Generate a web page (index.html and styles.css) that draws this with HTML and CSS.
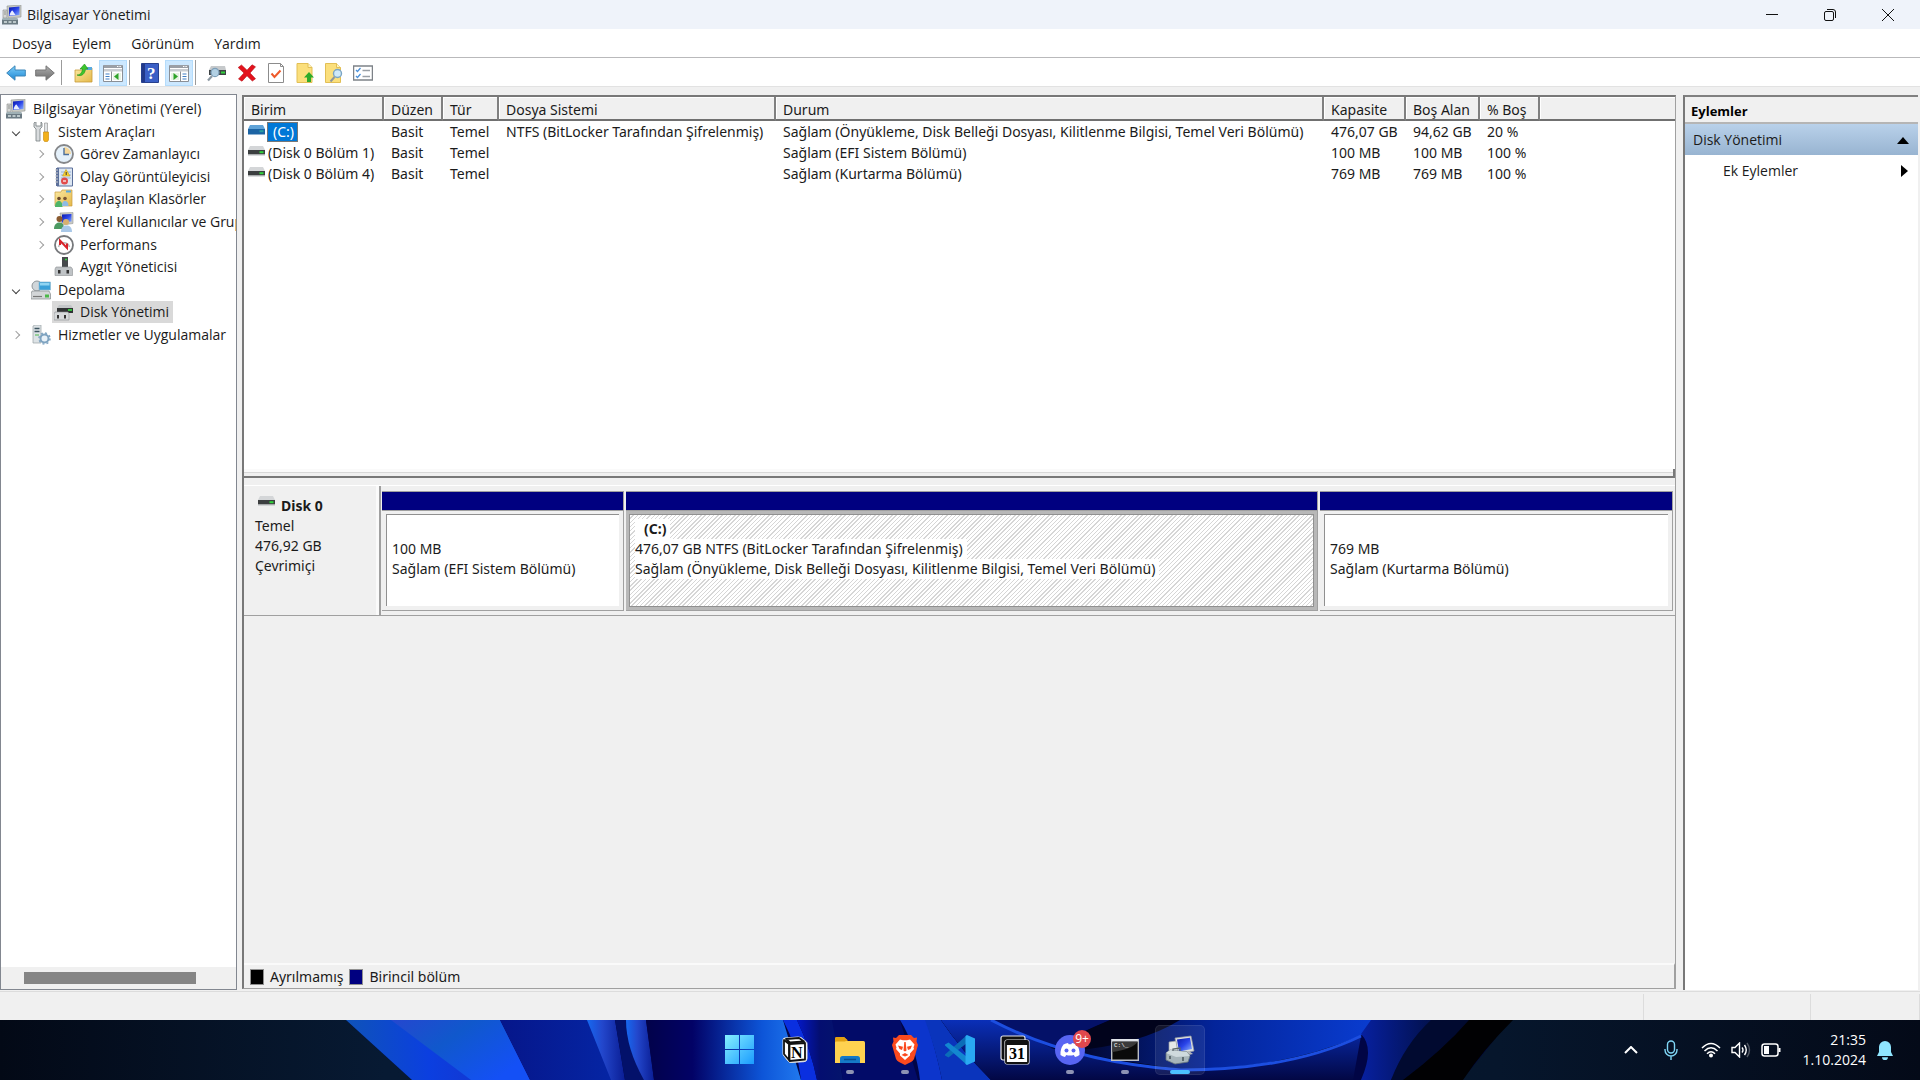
FILE: index.html
```html
<!DOCTYPE html>
<html lang="tr">

<head>
    <meta charset="UTF-8">
    <meta name="viewport" content="width=device-width, initial-scale=1.0">
    <title>Bilgisayar Yönetimi</title>
    <link rel="stylesheet" href="styles.css">
</head>

<body>
    <!-- shared icons -->
    <svg class="sprite" aria-hidden="true">
        <defs>
            <linearGradient id="g-screen" x1="0" y1="0" x2="1" y2="1">
                <stop offset="0" stop-color="#0a18a8" />
                <stop offset=".5" stop-color="#2a44e8" />
                <stop offset="1" stop-color="#8fb4ff" />
            </linearGradient>
            <linearGradient id="g-folder" x1="0" y1="0" x2="1" y2="1">
                <stop offset="0" stop-color="#fbe9a2" />
                <stop offset="1" stop-color="#e5b94a" />
            </linearGradient>
            <linearGradient id="g-blue" x1="0" y1="0" x2="0" y2="1">
                <stop offset="0" stop-color="#7fd0fa" />
                <stop offset="1" stop-color="#1b86d4" />
            </linearGradient>
            <linearGradient id="g-gray" x1="0" y1="0" x2="0" y2="1">
                <stop offset="0" stop-color="#b0b0b0" />
                <stop offset="1" stop-color="#6a6a6a" />
            </linearGradient>
        </defs>
        <symbol id="i-computer" viewBox="0 0 20 20">
            <path d="M5 1 19 0v12l-13 1z" fill="#c9cbc4" stroke="#8f9290" stroke-width=".6" />
            <path d="M7 2.500 17.500 1.500v8.500L7 11z" fill="url(#g-screen)" />
            <path d="M7.500 10.500c.5-3 2-5 3-5l3 4.500z" fill="#e6ecff" />
            <path d="M1 5h4v8H1z" fill="#d5d7d5" stroke="#888" stroke-width=".6" />
            <path d="M2 7h2M2 9h2" stroke="#777" stroke-width=".7" />
            <path d="M1 13h14l1 2v4.500H0V15z" fill="#6b7a83" />
            <path d="M1 13h14l1 2H0z" fill="#9fb0b5" />
            <path d="M2 17h3M6.500 17h3M11 17h3" stroke="#d8e2e4" stroke-width="1.400" />
        </symbol>
        <symbol id="i-drive" viewBox="0 0 17 10">
            <path d="M2 0h13l2 4H0z" fill="#d4d6d8" />
            <path d="M0 4h17v4.500H0z" fill="#3c3f40" />
            <path d="M0 8.500h17V9.500H0z" fill="#b7babc" />
            <path d="M11.500 6.200h4" stroke="#2fd43a" stroke-width="2" />
        </symbol>
        <symbol id="i-drive-sel" viewBox="0 0 17 10">
            <path d="M2 0h13l2 4H0z" fill="#5fa3d8" />
            <path d="M0 4h17v5.500H0z" fill="#1c64a4" />
            <path d="M11.500 6.200h4" stroke="#28a0a0" stroke-width="2" />
        </symbol>
    </svg>

    <header class="titlebar">
        <svg class="icon20"><use href="#i-computer" /></svg>
        <h1>Bilgisayar Yönetimi</h1>
        <div class="window-buttons">
            <button aria-label="Simge durumuna küçült"><svg width="12" height="12" viewBox="0 0 12 12"><path d="M0 5.500h12" /></svg></button>
            <button aria-label="Önceki boyut"><svg width="12" height="12" viewBox="0 0 12 12"><rect x=".5" y="2.500" width="9" height="9" rx="1.500" /><path d="M3 .5h6a2.500 2.500 0 0 1 2.500 2.500v6" /></svg></button>
            <button aria-label="Kapat"><svg width="12" height="12" viewBox="0 0 12 12"><path d="M0 0l12 12M12 0 0 12" /></svg></button>
        </div>
    </header>

    <nav class="menubar">
        <button>Dosya</button>
        <button>Eylem</button>
        <button>Görünüm</button>
        <button>Yardım</button>
    </nav>

    <div class="toolbar" role="toolbar">
        <button aria-label="Geri"><svg width="20" height="16" viewBox="0 0 20 16"><path d="M.7 8 9 .8V5H19.300v6H9v4.200z" fill="url(#g-blue)" stroke="#3d86b8" /></svg></button>
        <button aria-label="İleri"><svg width="20" height="16" viewBox="0 0 20 16"><path d="M19.300 8 11 .8V5H.7v6H11v4.200z" fill="url(#g-gray)" stroke="#777" /></svg></button>
        <span class="sep"></span>
        <button aria-label="Bir düzey yukarı">
            <svg width="20" height="20" viewBox="0 0 20 20">
                <path d="M1 7h7l2-2h8v14H1z" fill="url(#g-folder)" stroke="#c79a38" stroke-width=".8" />
                <path d="M12 4h6v3h-6z" fill="#5aa9dd" />
                <path d="M3 12c3 0 5-2 5.500-6H6l4.500-5L14 6h-2.500c-.5 5-4 8-8.500 6z" fill="#3cc52e" stroke="#239018" stroke-width=".6" />
            </svg>
        </button>
        <button class="on" aria-label="Konsol ağacını göster">
            <svg width="20" height="18" viewBox="0 0 20 18">
                <path d="M.5 1.500h19v16H.5z" fill="#fff" stroke="#8a8f96" />
                <path d="M1 1h18v3H1z" fill="#9a9fa6" /><path d="M14 2.500h4" stroke="#fff" stroke-dasharray="1 .6" />
                <path d="M1 5h18v2.500H1z" fill="#c9cdd2" />
                <path d="M2.500 10h4M2.500 12.500h4M2.500 15h4" stroke="#3f7ec5" stroke-width="1.200" />
                <path d="M8.500 7.500v10" stroke="#8a8f96" />
                <path d="M10 9h8v7h-8z" fill="#e8f3e4" /><path d="M15.500 9v7L11 12.500z" fill="#2fa32a" />
            </svg>
        </button>
        <span class="sep tight"></span>
        <button aria-label="Yardım">
            <svg width="18" height="20" viewBox="0 0 18 20">
                <path d="M.5.5h17v19H.5z" fill="#3a5fc6" stroke="#27408e" /><path d="M1 1h3v18H1z" fill="#22398a" />
                <text x="6" y="16" class="glyph-help">?</text>
            </svg>
        </button>
        <button class="on" aria-label="Eylem bölmesini göster">
            <svg width="20" height="18" viewBox="0 0 20 18">
                <path d="M.5 1.500h19v16H.5z" fill="#fff" stroke="#8a8f96" />
                <path d="M1 1h18v3H1z" fill="#9a9fa6" /><path d="M14 2.500h4" stroke="#fff" stroke-dasharray="1 .6" />
                <path d="M1 5h18v2.500H1z" fill="#c9cdd2" />
                <path d="M13.500 10h4M13.500 12.500h4M13.500 15h4" stroke="#3f7ec5" stroke-width="1.200" />
                <path d="M11.500 7.500v10" stroke="#8a8f96" />
                <path d="M2 9h8v7H2z" fill="#e8f3e4" /><path d="M4.500 9v7L9 12.500z" fill="#2fa32a" />
            </svg>
        </button>
        <span class="sep tight"></span>
        <button class="wide" aria-label="Diskleri yeniden tara">
            <svg width="20" height="18" viewBox="0 0 20 18">
                <path d="M4 2h14l1 4H2z" fill="#c6c9cb" /><path d="M2 6h17v5H2z" fill="#3d4244" /><path d="M14 8.500h4" stroke="#31d13c" stroke-width="2" />
                <circle cx="8" cy="8.500" r="4" fill="#bfe0f5" fill-opacity=".9" stroke="#7e9fb8" stroke-width="1.300" />
                <path d="M5 12 1 16.500" stroke="#8b98a2" stroke-width="2.200" />
            </svg>
        </button>
        <button aria-label="Sil"><svg width="20" height="18" viewBox="0 0 20 18"><path d="M4.500 1 10 6.200 15 .8l3.500 2L13 9l5.500 5.800L15.300 17 10 11.800 5 17.200 1.500 15 7 9 1.200 3.500z" fill="#e3121c" stroke="#b50d15" stroke-width=".6" /></svg></button>
        <button aria-label="Özellikler"><svg width="20" height="20" viewBox="0 0 20 20"><path d="M2.500.5h12l3 3v16h-15z" fill="#fff" stroke="#8c8c8c" /><path d="M14.500.5v3h3" fill="none" stroke="#8c8c8c" /><path d="m5.500 10.500 3 3.500 6-6.500" fill="none" stroke="#ee5a2a" stroke-width="2" /></svg></button>
        <button aria-label="Dışarı aktar"><svg width="20" height="20" viewBox="0 0 20 20"><path d="M2 .5h11l4 4v15H2z" fill="#fbdf7c" stroke="#e2bf55" /><path d="M13 .5v4h4" fill="#fff3bd" stroke="#e2bf55" /><path d="M14 9l5 5.500h-3V19h-4v-4.500H9z" fill="#2eab29" /></svg></button>
        <button aria-label="Bul"><svg width="20" height="20" viewBox="0 0 20 20"><path d="M1.500.5h11l4 4v15h-15z" fill="#fbdf7c" stroke="#e2bf55" /><path d="M12.500.5v4h4" fill="#fff3bd" stroke="#e2bf55" /><circle cx="13.500" cy="10.500" r="4" fill="#cfe9fa" stroke="#7ba5c3" stroke-width="1.400" /><path d="m10.500 14-4 4.500" stroke="#8f969b" stroke-width="2" /></svg></button>
        <button aria-label="Liste"><svg width="20" height="16" viewBox="0 0 20 16"><path d="M.5 1h19v14H.5z" fill="#fff" stroke="#7d8288" stroke-width="1.500" /><path d="m3 5 1.500 1.500L7.500 3M3 11l1.500 1.500L7.500 9" fill="none" stroke="#4a90d9" stroke-width="1.300" /><path d="M9.500 5.500H17M9.500 11.500H17" stroke="#9aa0a6" stroke-width="1.400" /></svg></button>
    </div>

    <main class="workspace">
        <aside class="tree-pane">
            <ul class="tree" role="tree">
                <li class="lv0">
                    <svg class="icon20"><use href="#i-computer" /></svg>
                    <span>Bilgisayar Yönetimi (Yerel)</span>
                </li>
                <li class="lv1">
                    <i class="chev open"></i>
                    <svg class="icon20" viewBox="0 0 20 20">
                        <path d="M4 0 3 1v4l2 2v12h4V7l2-2V1L10 0v4H5V0z" fill="#d9dcde" stroke="#777d82" stroke-width=".8" />
                        <path d="M13.500 1h3v9h-3z" fill="#e1e4e6" stroke="#888" stroke-width=".6" />
                        <path d="M12.500 10h5v8l-1 1.500h-3l-1-1.500z" fill="#f2b01a" stroke="#c88607" stroke-width=".6" />
                    </svg>
                    <span>Sistem Araçları</span>
                </li>
                <li class="lv2">
                    <i class="chev"></i>
                    <svg class="icon20" viewBox="0 0 20 20">
                        <circle cx="10" cy="10" r="9" fill="#e4f0fa" stroke="#85878a" stroke-width="1.800" />
                        <path d="M10 10V3a7 7 0 0 1 7 7z" fill="#f6d79a" />
                        <path d="M10 4v6.500h5" fill="none" stroke="#4b6f9c" stroke-width="1.400" />
                    </svg>
                    <span>Görev Zamanlayıcı</span>
                </li>
                <li class="lv2">
                    <i class="chev"></i>
                    <svg class="icon20" viewBox="0 0 20 20">
                        <path d="M3 1h15.500v18H3z" fill="#dce6f2" stroke="#5b6f9a" /><path d="M2 1h3v18H2z" fill="#5b6f9a" />
                        <path d="M1 3h3M1 6h3M1 9h3M1 12h3M1 15h3" stroke="#ccc" />
                        <path d="M7 5h10M7 8h10M7 11h10" stroke="#7a9cd0" stroke-width=".7" />
                        <path d="M12 2.500 16 9H8.500z" fill="#fbd332" stroke="#c29a12" stroke-width=".6" /><path d="M12.200 5v3" stroke="#333" />
                        <circle cx="10.500" cy="14" r="3.500" fill="#e24b4b" /><path d="M9 14h3" stroke="#fff" stroke-width="1.200" />
                    </svg>
                    <span>Olay Görüntüleyicisi</span>
                </li>
                <li class="lv2">
                    <i class="chev"></i>
                    <svg class="icon20" viewBox="0 0 20 20">
                        <path d="M1 3h6l1-2h10v16H1z" fill="url(#g-folder)" stroke="#c99b3d" stroke-width=".7" /><path d="M12 1.500h5v2h-5z" fill="#5aa9dd" />
                        <circle cx="5" cy="9.500" r="1.800" fill="#6b4a2c" /><circle cx="11" cy="9.500" r="1.800" fill="#7a5734" />
                        <path d="M1 18c0-5 2.500-6 4-6s3.500 1 3.500 6z" fill="#4fb56a" /><path d="M8 17c0-4 1.500-5 3-5s3.500 1 3.500 5z" fill="#8ebbe4" />
                    </svg>
                    <span>Paylaşılan Klasörler</span>
                </li>
                <li class="lv2">
                    <i class="chev"></i>
                    <svg class="icon20" viewBox="0 0 20 20">
                        <path d="M6 1 19 .5v11L8 13z" fill="#c9cbc4" stroke="#999" stroke-width=".6" /><path d="M8 2.500 17.500 2v7.500L8 10.500z" fill="url(#g-screen)" />
                        <circle cx="5.500" cy="7" r="3" fill="#8a5a30" /><circle cx="12" cy="10" r="3" fill="#d8b070" />
                        <path d="M0 17c0-5 3-6.500 5.500-6.500S10 12 10 17z" fill="#4d9a63" /><path d="M7 20c0-5 2.500-6.500 5.500-6.500S18 15 18 20z" fill="#a9c8e8" />
                    </svg>
                    <span>Yerel Kullanıcılar ve Gruplar</span>
                </li>
                <li class="lv2">
                    <i class="chev"></i>
                    <svg class="icon20" viewBox="0 0 20 20">
                        <circle cx="10" cy="10" r="9" fill="#fff" stroke="#77797c" stroke-width="1.800" />
                        <path d="M4.500 12a5.700 5.700 0 0 1 11 0" fill="none" stroke="#bbb" stroke-width="1.500" />
                        <path d="M6 10V5.500l7 7.500V8.500" fill="none" stroke="#d8232a" stroke-width="2" />
                    </svg>
                    <span>Performans</span>
                </li>
                <li class="lv2">
                    <i class="chev none"></i>
                    <svg class="icon20" viewBox="0 0 20 20">
                        <path d="M8 0h6v11H8z" fill="#46494c" /><path d="M11 2.500h2" stroke="#35d23f" stroke-width="1.500" />
                        <path d="M2 10h15l1.500 2v6.500H1V12z" fill="#bfc3c6" stroke="#8b8f92" stroke-width=".6" />
                        <path d="M4 13h2.500v3.500H4zM12.500 13H15v3.500h-2.500z" fill="#333" />
                    </svg>
                    <span>Aygıt Yöneticisi</span>
                </li>
                <li class="lv1">
                    <i class="chev open"></i>
                    <svg class="icon20" viewBox="0 0 20 20">
                        <circle cx="6" cy="6" r="5" fill="#d0d6da" stroke="#8e9599" /><path d="M8 2h11.500v8H8z" fill="#3aa0d8" stroke="#8fbcd2" stroke-width=".7" /><path d="M9 3h9.500v2.500H9z" fill="#8fd4f2" />
                        <path d="M1 11h17l1.500 3v5H0v-5z" fill="#d3d6d8" stroke="#85898c" stroke-width=".7" /><path d="M2 16.500h9" stroke="#777" stroke-width="1.200" /><path d="M14 14.500h4v3h-4z" fill="#4bb84a" />
                    </svg>
                    <span>Depolama</span>
                </li>
                <li class="lv2 selected">
                    <i class="chev none"></i>
                    <svg class="icon20" viewBox="0 0 20 20">
                        <path d="M5 3h12l2 3H3z" fill="#c3c6c8" /><path d="M3 6h16v5H3z" fill="#2f3233" /><path d="M14 8h4" stroke="#35d23f" stroke-width="1.800" />
                        <path d="M1 10h13l1 2v6H0v-6z" fill="#d6d9db" stroke="#8b8f92" stroke-width=".6" /><path d="M3 13h2v3.500H3zM10 13h2v3.500h-2z" fill="#333" />
                    </svg>
                    <span>Disk Yönetimi</span>
                </li>
                <li class="lv1">
                    <i class="chev"></i>
                    <svg class="icon20" viewBox="0 0 20 20">
                        <path d="M2 1 4 0h6v18H2z" fill="#dde3e6" stroke="#98a0a5" stroke-width=".7" /><path d="M3.500 3.500h5M3.500 6.500h5" stroke="#3d5560" stroke-width="1.300" /><path d="M4 10h4" stroke="#4bb84a" />
                        <circle cx="13.500" cy="13.500" r="4" fill="#e8f1f8" stroke="#7ea3c0" stroke-width="2" />
                        <circle cx="13.500" cy="13.500" r="5.500" fill="none" stroke="#7ea3c0" stroke-width="1.500" stroke-dasharray="2 2.300" />
                    </svg>
                    <span>Hizmetler ve Uygulamalar</span>
                </li>
            </ul>
            <div class="hscroll"><div class="thumb"></div></div>
        </aside>

        <section class="content">
            <div class="volumes">
                <table>
                    <colgroup>
                        <col class="c-birim">
                        <col class="c-duzen">
                        <col class="c-tur">
                        <col class="c-dosya">
                        <col class="c-durum">
                        <col class="c-kap">
                        <col class="c-bos">
                        <col class="c-yuzde">
                        <col>
                    </colgroup>
                    <thead>
                        <tr>
                            <th>Birim</th>
                            <th>Düzen</th>
                            <th>Tür</th>
                            <th>Dosya Sistemi</th>
                            <th>Durum</th>
                            <th>Kapasite</th>
                            <th>Boş Alan</th>
                            <th>% Boş</th>
                            <th></th>
                        </tr>
                    </thead>
                    <tbody>
                        <tr>
                            <td class="vol"><svg class="drive"><use href="#i-drive-sel" /></svg><mark>(C:)</mark></td>
                            <td>Basit</td>
                            <td>Temel</td>
                            <td>NTFS (BitLocker Tarafından Şifrelenmiş)</td>
                            <td>Sağlam (Önyükleme, Disk Belleği Dosyası, Kilitlenme Bilgisi, Temel Veri Bölümü)</td>
                            <td>476,07 GB</td>
                            <td>94,62 GB</td>
                            <td>20 %</td>
                            <td></td>
                        </tr>
                        <tr>
                            <td class="vol"><svg class="drive"><use href="#i-drive" /></svg><span>(Disk 0 Bölüm 1)</span></td>
                            <td>Basit</td>
                            <td>Temel</td>
                            <td></td>
                            <td>Sağlam (EFI Sistem Bölümü)</td>
                            <td>100 MB</td>
                            <td>100 MB</td>
                            <td>100 %</td>
                            <td></td>
                        </tr>
                        <tr>
                            <td class="vol"><svg class="drive"><use href="#i-drive" /></svg><span>(Disk 0 Bölüm 4)</span></td>
                            <td>Basit</td>
                            <td>Temel</td>
                            <td></td>
                            <td>Sağlam (Kurtarma Bölümü)</td>
                            <td>769 MB</td>
                            <td>769 MB</td>
                            <td>100 %</td>
                            <td></td>
                        </tr>
                    </tbody>
                </table>
                <div class="splitter"></div>
            </div>

            <div class="graph">
                <div class="disk">
                    <div class="disk-label">
                        <h2><svg class="drive"><use href="#i-drive" /></svg>Disk 0</h2>
                        <p>Temel</p>
                        <p>476,92 GB</p>
                        <p>Çevrimiçi</p>
                    </div>
                    <div class="parts">
                        <div class="part efi">
                            <div class="bar"></div>
                            <div class="box"><div class="inner">
                                <p>100 MB</p>
                                <p>Sağlam (EFI Sistem Bölümü)</p>
                            </div></div>
                        </div>
                        <div class="part main active">
                            <div class="bar"></div>
                            <div class="box"><div class="inner">
                                <p class="name">(C:)</p>
                                <p>476,07 GB NTFS (BitLocker Tarafından Şifrelenmiş)</p>
                                <p>Sağlam (Önyükleme, Disk Belleği Dosyası, Kilitlenme Bilgisi, Temel Veri Bölümü)</p>
                            </div></div>
                        </div>
                        <div class="part recovery">
                            <div class="bar"></div>
                            <div class="box"><div class="inner">
                                <p>769 MB</p>
                                <p>Sağlam (Kurtarma Bölümü)</p>
                            </div></div>
                        </div>
                    </div>
                </div>
                <div class="legend">
                    <span class="swatch black"></span>Ayrılmamış
                    <span class="swatch navy"></span>Birincil bölüm
                </div>
            </div>
        </section>

        <aside class="actions">
            <h2>Eylemler</h2>
            <button class="group">Disk Yönetimi <svg width="12" height="7" viewBox="0 0 12 7"><path d="M6 0l6 7H0z" /></svg></button>
            <button class="item">Ek Eylemler <svg width="7" height="12" viewBox="0 0 7 12"><path d="M0 0l7 6-7 6z" /></svg></button>
        </aside>
    </main>

    <div class="statusbar">
        <span></span>
        <span></span>
        <span></span>
    </div>

    <footer class="taskbar">
        <svg class="wallpaper" viewBox="0 0 1920 60" preserveAspectRatio="none" aria-hidden="true">
            <defs>
                <linearGradient id="w-bg"><stop offset="0" stop-color="#030916" /><stop offset=".2" stop-color="#071a33" /><stop offset=".78" stop-color="#06162c" /><stop offset="1" stop-color="#040a18" /></linearGradient>
                <linearGradient id="w-a"><stop offset="0" stop-color="#0f53b8" /><stop offset=".45" stop-color="#0b3fe0" /><stop offset="1" stop-color="#1a2fc4" /></linearGradient>
                <linearGradient id="w-b" x1="0" y1="0" x2="1" y2=".6"><stop offset="0" stop-color="#2547cf" /><stop offset=".45" stop-color="#1058cc" /><stop offset="1" stop-color="#1450f6" /></linearGradient>
                <linearGradient id="w-c"><stop offset="0" stop-color="#06168a" /><stop offset="1" stop-color="#0525a4" /></linearGradient>
                <linearGradient id="w-d"><stop offset="0" stop-color="#1668f0" /><stop offset=".4" stop-color="#2347cc" /><stop offset="1" stop-color="#0a1d94" /></linearGradient>
                <linearGradient id="w-e"><stop offset="0" stop-color="#02024a" /><stop offset=".3" stop-color="#020266" /><stop offset=".75" stop-color="#0d55d8" /><stop offset="1" stop-color="#2078ee" /></linearGradient>
                <linearGradient id="w-f"><stop offset="0" stop-color="#0418c8" /><stop offset=".5" stop-color="#040e70" /><stop offset="1" stop-color="#04146c" /></linearGradient>
                <linearGradient id="w-g" x1="0" y1="0" x2=".8" y2="1"><stop offset="0" stop-color="#0b36c4" /><stop offset="1" stop-color="#020640" /></linearGradient>
                <linearGradient id="w-h"><stop offset="0" stop-color="#020528" /><stop offset=".45" stop-color="#03249a" /><stop offset="1" stop-color="#0a3fd6" /></linearGradient>
                <linearGradient id="w-i"><stop offset="0" stop-color="#0720a0" /><stop offset="1" stop-color="#02114e" /></linearGradient>
                <linearGradient id="w-j" x1="0" y1="0" x2="0" y2="1"><stop offset="0" stop-color="#0a2fb8" /><stop offset="1" stop-color="#020744" /></linearGradient>
            </defs>
            <path d="M0 0h1920v60H0z" fill="url(#w-bg)" />
            <path d="M346 0H1510L1462 60H412z" fill="#010545" />
            <path d="M346 0H500L530 60H412z" fill="url(#w-a)" />
            <path d="M391 0H500L530 60H471z" fill="url(#w-b)" />
            <path d="M500 0h88l24 60h-82z" fill="url(#w-c)" />
            <path d="M587 0h28l10 60h-14z" fill="url(#w-d)" />
            <path d="M615 0h12q0 28 18 60h-20z" fill="#03116a" />
            <path d="M626 0h20l8 60h-10Q626 28 626 0z" fill="url(#w-d)" />
            <path d="M646 0h137l18 60H654z" fill="url(#w-e)" />
            <path d="M783 0h14q14 30 20 60h-16q-4-34-18-60z" fill="#0a2fe0" />
            <path d="M797 0h36l10 60h-26q-6-30-20-60z" fill="url(#w-f)" />
            <path d="M832 0h68l18 60h-75z" fill="#020b68" />
            <path d="M900 0h26q10 30 16 60h-22q-4-34-20-60z" fill="#0c35cc" />
            <path d="M925 0h16q20 30 50 60h-49q-6-30-17-60z" fill="#0a34bc" />
            <path d="M941 0h50q80 40 190 48 120 0 170-40v52H991Q961 30 941 0z" fill="#020830" />
            <path d="M991 0q80 42 190 50 110 0 180-34l-8 44h-362Q961 30 941 0z" fill="url(#w-j)" />
            <path d="M991 0h120q-30 12-60 28Q1020 12 991 0z" fill="#041168" />
            <path d="M1110 0h285q-8 10-34 16-80 34-180 34-70-6-130-22 30-16 59-28z" fill="#01031c" />
            <path d="M1180 0h210q-20 12-30 16-80 34-180 33-60-8-110-18 70-6 110-31z" fill="url(#w-h)" />
            <path d="M991 0q80 42 190 50 110 0 180-34" fill="none" stroke="#1c4ee0" stroke-width="3" />
            <path d="M1361 14q14 14 0 46h30l40-60h-60z" fill="url(#w-i)" />
            <path d="M1431 0q-26 24-40 60h30q18-30 49-60z" fill="#010a30" />
            <path d="M1469 0h44q-30 30-50 60h-60q40-30 66-60z" fill="#010103" />
        </svg>

        <nav class="apps">
            <button aria-label="Başlat">
                <svg width="30" height="30" viewBox="0 0 30 30"><defs><linearGradient id="win" x1="0" y1="0" x2="1" y2="1"><stop offset="0" stop-color="#85f0ff" /><stop offset="1" stop-color="#1a9bff" /></linearGradient></defs><path d="M0 0h14v14H0zM15 0h14v14H15zM0 15h14v14H0zM15 15h14v14H15z" fill="url(#win)" /></svg>
            </button>
            <button aria-label="Notion">
                <svg width="28" height="28" viewBox="0 0 28 28">
                    <path d="M2 4Q2 2 4 2l13-1 3 .5 5 4q1 1 1 2v15q0 3-3 3.200L10 26.500q-2 0-3-1.500l-4-5q-1-1-1-2z" fill="#fff" stroke="#ddd" />
                    <path d="M3 4v14l5 6V8zM5 3l4 3.500 14-1L18 2z" fill="#fff" stroke="#111" stroke-width="1.800" stroke-linejoin="round" />
                    <path d="M8.500 8 24 7v16.500L8.500 25z" fill="#fff" stroke="#111" stroke-width="1.800" stroke-linejoin="round" />
                    <text x="10" y="22" class="glyph-n">N</text>
                </svg>
            </button>
            <button class="run" aria-label="Dosya Gezgini">
                <svg width="30" height="28" viewBox="0 0 30 28"><path d="M0 2.500Q0 1 1.500 1H9l4 4h9v6H0z" fill="#e2a012" /><path d="M0 9V6.500Q0 5 1.500 5h27Q30 5 30 6.500V27H0z" fill="#ffd250" /><path d="M0 2.500Q0 1 1.500 1H9l3.500 3L10 5.500H0z" fill="#e2a012" /><path d="M5 27v-4.500Q5 20 7.500 20h15q2.500 0 2.500 2.500V27z" fill="#1579c8" /><path d="M9 23.500h12" stroke="#0b4f91" stroke-width="1.500" /></svg>
            </button>
            <button class="run" aria-label="Brave">
                <svg width="26" height="30" viewBox="0 0 26 30">
                    <path d="M7 0h12l3 3 3-.5-.5 4L26 10l-4 14q-1 2-3 3l-6 3-6-3q-2-1-3-3L0 10l1.500-3.500L1 2.500 4 3z" fill="#fb4a1e" />
                    <path d="M8 4.500l3 .7h4l3-.7 4.500 5-1 3 .5 1.500-4 4.500v2L13 25l-5-4.500v-2L4 14l.5-1.500-1-3z" fill="#fff" />
                    <path d="m6 10.500 5 1.200-1 3.300-2.500-1zM20 10.500l-5 1.200 1 3.300 2.500-1zM9.500 20l3.500-2 3.500 2-3.500 1.500zM12.300 7h1.400l.8 8.500L13 16.500l-1.500-1z" fill="#fb4a1e" />
                </svg>
            </button>
            <button aria-label="Visual Studio Code">
                <svg width="30" height="30" viewBox="0 0 30 30"><path d="M22 0v8L3.500 22.500 0 20.500v-1z" fill="#0b6db8" /><path d="M22 30v-8L3.500 7.500 0 9.500v1z" fill="#1387d0" /><path d="M22 0l8 3.500v23L22 30l-1.500-1V1z" fill="#29a9f2" /></svg>
            </button>
            <button aria-label="Takvim">
                <svg width="30" height="30" viewBox="0 0 30 30">
                    <rect x="1" y="1" width="24" height="24" rx="2" fill="#111" stroke="#e8e8e8" stroke-width="1.200" />
                    <rect x="5" y="5" width="24" height="24" rx="2" fill="#fff" stroke="#e8e8e8" stroke-width="1.200" />
                    <rect x="6" y="6" width="22" height="22" rx="1" fill="#fff" stroke="#111" stroke-width="1.800" /><path d="M6 6h22v4H6z" fill="#111" />
                    <text x="9" y="24" class="glyph-31">31</text>
                </svg>
            </button>
            <button class="run" aria-label="Discord">
                <svg width="30" height="30" viewBox="0 0 30 30"><circle cx="15" cy="15" r="15" fill="#5865f2" /><path d="M8.500 9.500q2.500-1.500 4.500-1.500l.7 1.200h2.600L17 8q2 0 4.500 1.500Q25 14 24.500 20q-2 1.700-4.500 2l-1.200-2q-3.800 1-7.600 0L10 22q-2.500-.3-4.500-2Q5 14 8.500 9.500z" fill="#fff" /><circle cx="11.500" cy="15.500" r="2" fill="#5865f2" /><circle cx="18.500" cy="15.500" r="2" fill="#5865f2" /></svg>
                <span class="badge">9+</span>
            </button>
            <button class="run" aria-label="Komut İstemi">
                <svg width="28" height="24" viewBox="0 0 28 24"><path d="M.7 1.700h26.600v20.600H.7z" fill="#0a0a0a" stroke="#b9bdc4" stroke-width="1.400" /><path d="M1 1h26v2.500H1z" fill="#dfe3e8" /><path d="M1.500 4h25q-5 7-25 10z" fill="#3a3a3a" /><text x="3" y="9" class="glyph-cmd">C:\_</text></svg>
            </button>
            <button class="run focus" aria-label="Bilgisayar Yönetimi">
                <svg width="30" height="30" viewBox="0 0 30 30">
                    <path d="M10 3 26 1l3 15-16 3z" fill="#dcdfe0" stroke="#9a9ea0" stroke-width=".7" /><path d="M12 4.500 25 2.700 27 14l-13 2.500z" fill="url(#g-screen)" /><path d="M4 7l7-1 2 12-9 1z" fill="#e6e8e8" stroke="#9a9ea0" stroke-width=".7" /><path d="M18 17l6-1 4 3-9 2z" fill="#b7babc" />
                    <path d="M1 18l4-3 17 2 3 4-2 6-13 2-9-4z" fill="#a7b5ba" stroke="#66757b" stroke-width=".8" /><path d="M1 18l4-3 17 2 3 4-14 1z" fill="#cfdadd" /><path d="M8 16v-2l7-1v3" fill="none" stroke="#5a666b" stroke-width="1.300" /><path d="M5 21v3M18 22v4" stroke="#48545a" stroke-width="1.500" />
                </svg>
            </button>
        </nav>

        <div class="tray">
            <button aria-label="Gizli simgeler"><svg width="14" height="8" viewBox="0 0 14 8"><path d="m1 7 6-6 6 6" stroke-width="2" /></svg></button>
            <button class="mic" aria-label="Mikrofon"><svg width="14" height="20" viewBox="0 0 14 20"><rect x="3.500" y="1" width="7" height="12" rx="3.500" stroke-width="1.400" /><path d="M1 9v1a6 6 0 0 0 12 0V9M7 16v4" stroke-width="1.400" /></svg></button>
            <button class="quick" aria-label="Ağ, ses ve pil">
                <svg width="20" height="16" viewBox="0 0 20 16"><path d="M1 6q9-9 18 0M3.500 9q6.500-6.500 13 0M6 11.800q4-4 8 0" stroke-width="1.500" /><circle cx="10" cy="13.500" r="2" class="fill" /></svg>
                <svg width="20" height="16" viewBox="0 0 20 16"><path d="M1 5.500h3L8.500 1v14L4 10.500H1zM11 5.500q2 2.500 0 5M13.500 3q3.500 5 0 10" stroke-width="1.400" /><path d="M16 1q5 7 0 14" stroke-width="1.400" opacity=".3" /></svg>
                <svg width="20" height="14" viewBox="0 0 20 14"><rect x="1" y="1" width="16" height="12" rx="2.500" stroke-width="1.500" /><path d="M3 3h5v8H3z" class="fill" /><path d="M18.500 5v4" stroke-width="2" /></svg>
            </button>
            <button class="clock">21:35<br>1.10.2024</button>
            <button class="bell" aria-label="Bildirimler"><svg width="16" height="20" viewBox="0 0 16 20"><path d="M8 1a6 6 0 0 1 6 6v5l2 4H0l2-4V7a6 6 0 0 1 6-6zM5 17.200h6a3 3 0 0 1-6 0z" class="fill" /></svg></button>
        </div>
    </footer>
</body>

</html>
```
FILE: styles.css
```css
* {
    box-sizing: border-box;
}

body {
    margin: 0;
    height: 100vh;
    display: flex;
    flex-direction: column;
    background: #f0f0f0;
    color: #1b1b1b;
    font-family: "Open Sans", "Noto Sans", sans-serif;
    font-size: 14px;
    line-height: 20px;
    overflow: hidden;
}

h1,
h2,
p,
ul {
    margin: 0;
    padding: 0;
}

button {
    border: none;
    background: none;
    padding: 0;
    font: inherit;
    color: inherit;
}

svg {
    display: block;
    flex: none;
}

.sprite {
    position: absolute;
    width: 0;
    height: 0;
}

.icon20 {
    width: 20px;
    height: 20px;
}

.drive {
    width: 17px;
    height: 10px;
}

/* title bar */
.titlebar {
    display: flex;
    align-items: center;
    height: 29px;
    padding-left: 2px;
    background: #eff3fa;
}

.titlebar h1 {
    margin-left: 5px;
    font-size: 14px;
    font-weight: normal;
}

.window-buttons {
    display: flex;
    margin-left: auto;
    padding-right: 3px;
}

.window-buttons button {
    display: flex;
    align-items: center;
    justify-content: center;
    width: 58px;
    height: 28px;
}

.window-buttons svg {
    fill: none;
    stroke: #111;
    overflow: visible;
}

/* menu */
.menubar {
    display: flex;
    gap: 20px;
    height: 29px;
    padding: 1px 0 0 12px;
    background: #fff;
    border-bottom: 1px solid #b9b9bb;
}

/* toolbar */
.toolbar {
    display: flex;
    align-items: center;
    gap: 1px;
    height: 29px;
    padding: 1px 0 0 2px;
    background: #fff;
    border-bottom: 1px solid #e2e2e2;
}

.toolbar button {
    display: flex;
    align-items: center;
    justify-content: center;
    width: 28px;
    height: 26px;
}

.toolbar .wide {
    width: 30px;
}

.toolbar .on {
    background: #cce8ff;
    border: 1px solid #b5dcfb;
}

.toolbar .sep {
    width: 1px;
    height: 25px;
    margin: 0 7px 0 1px;
    background: #9b9b9b;
}

.toolbar .sep.tight {
    margin: 0 5px 0 1px;
}

.glyph-help {
    font: bold 17px "Liberation Serif", serif;
    fill: #fff;
}

/* panes */
.workspace {
    flex: 1;
    min-height: 0;
    display: grid;
    grid-template-columns: 237px 1fr 235px;
    padding: 7px 2px 1px 0;
}

.tree-pane {
    display: flex;
    flex-direction: column;
    justify-content: space-between;
    overflow: hidden;
    background: #fff;
    border: 1px solid #828790;
}

.tree {
    display: grid;
    grid-auto-rows: 1fr;
    height: 248px;
    margin-top: 3px;
    list-style: none;
    white-space: nowrap;
}

.tree li {
    display: flex;
    align-items: center;
    overflow: hidden;
}

.tree li > * {
    flex: none;
}

.tree span {
    padding: 0 4px;
}

.tree .lv0 {
    padding-left: 5px;
}

.tree .lv0 span {
    padding-left: 7px;
}

.tree .lv1 {
    padding-left: 8px;
}

.tree .lv2 {
    padding-left: 32px;
}

.tree .selected span,
.tree .selected svg {
    background: #d9d9d9;
}

.tree .selected span {
    line-height: 22px;
}

.tree .selected svg {
    height: 22px;
}

.tree .lv1 .icon20 {
    margin-right: 3px;
}

.tree .lv2 .icon20 {
    width: 24px;
    padding: 0 2px;
}

.chev {
    width: 14px;
    height: 14px;
    margin-right: 8px;
    display: flex;
    align-items: center;
    justify-content: center;
}

.tree .lv2 .chev {
    margin-right: 5px;
}

.chev::before {
    content: "";
    width: 5px;
    height: 5px;
    border: solid #a0a0a0;
    border-width: 1px 1px 0 0;
    transform: rotate(45deg);
}

.chev.open::before {
    border-color: #404040;
    transform: rotate(135deg);
}

.chev.none::before {
    display: none;
}

.hscroll {
    padding: 5px 40px 5px 23px;
    background: #f0f0f0;
}

.thumb {
    height: 12px;
    background: #858585;
}

.content {
    display: flex;
    flex-direction: column;
    margin: 1px 7px 1px 5px;
    border: 1px solid #a0a0a0;
    border-top: 2px solid #787878;
    border-left: 2px solid #787878;
    min-width: 0;
    font-family: "Noto Sans", "Open Sans", sans-serif;
}

/* volume list */
.volumes {
    flex: 385;
    display: flex;
    flex-direction: column;
    justify-content: space-between;
    min-height: 0;
    background: #fff;
}

table {
    width: 100%;
    table-layout: fixed;
    border-collapse: separate;
    border-spacing: 0;
}

th,
td {
    height: 21px;
    padding: 1px 0 0 7px;
    text-align: left;
    font-weight: normal;
    white-space: nowrap;
    line-height: 20px;
}

th {
    height: 24px;
    padding-top: 4px;
    line-height: 18px;
    background: #f0f0f0;
    border-right: 2px solid #808080;
    border-bottom: 2px solid #707070;
    box-shadow: inset 1px 1px #fff;
}

th:last-child {
    border-right: none;
}

.c-birim { width: 140px; }
.c-duzen { width: 59px; }
.c-tur { width: 56px; }
.c-dosya { width: 277px; }
.c-durum { width: 548px; }
.c-kap { width: 82px; }
.c-bos { width: 74px; }
.c-yuzde { width: 60px; }

.vol {
    display: flex;
    align-items: center;
    padding-left: 4px;
}

.vol .drive {
    margin-bottom: 4px;
}

.vol span {
    padding-left: 3px;
}

.vol mark {
    margin-left: 2px;
    padding: 0 4px 0 6px;
    background: #0078d7;
    color: #fff;
    outline: 1px solid #777;
    outline-offset: -1px;
}

.splitter {
    height: 9px;
    background: #f0f0f0;
    border: solid #787878;
    border-width: 0 2px 2px 0;
    box-shadow: inset 0 3px #fafafa, inset 0 4px #d8d8d8;
}

/* disk graph */
.graph {
    flex: 509;
    display: flex;
    flex-direction: column;
    justify-content: space-between;
    padding-top: 7px;
    min-height: 0;
}

.disk {
    display: flex;
    border-top: 1px solid #fff;
    border-bottom: 1px solid #a0a0a0;
}

.disk-label {
    width: 137px;
    height: 129px;
    padding: 10px 0 0 11px;
    border-right: 2px solid #a0a0a0;
    box-shadow: inset -3px 0 #fafafa;
}

.disk-label h2 {
    display: flex;
    gap: 6px;
    padding-left: 3px;
    font-size: 14px;
    line-height: 20px;
}

.parts {
    flex: 1;
    display: flex;
    gap: 2px;
    padding: 5px 2px 4px 1px;
}

.part {
    display: flex;
    flex-direction: column;
    min-width: 0;
}

.efi { flex: 242; }
.main { flex: 692; }
.recovery { flex: 353; }

.bar {
    height: 20px;
    background: #000080;
    border: 1px solid #a0a0a0;
    border-left: none;
}

.box {
    flex: 1;
    padding: 3px 4px 4px;
    border: solid #a0a0a0;
    border-width: 0 1px 1px 0;
}

.inner {
    height: 100%;
    padding: 24px 0 0 5px;
    background: #fff;
    border: solid #909090;
    border-width: 1px 0 0 1px;
    white-space: nowrap;
}

.active .box {
    padding: 3px;
    background: #b8b8b8;
}

.active .inner {
    display: flex;
    flex-direction: column;
    align-items: flex-start;
    padding-top: 4px;
    border-width: 1px;
    background: repeating-linear-gradient(135deg, #fff 0 2px, #d6d6d6 2px 3px);
}

.active p {
    background: #fff;
    padding-right: 4px;
}

.active .name {
    padding: 0 4px 0 9px;
    font-weight: bold;
}

.legend {
    display: flex;
    align-items: center;
    gap: 6px;
    height: 25px;
    padding-left: 6px;
    border-top: 2px solid #fafafa;
    border-right: 1px solid #a0a0a0;
}

.swatch {
    width: 14px;
    height: 16px;
    border: 1px solid #909090;
}

.black { background: #000; }
.navy { background: #000080; }

/* actions */
.actions {
    display: flex;
    flex-direction: column;
    margin-top: 1px;
    background: #fff;
    border-top: 2px solid #808080;
    border-left: 2px solid #787878;
}

.actions h2 {
    height: 27px;
    padding: 4px 0 0 6px;
    background: #f0f0f0;
    border-bottom: 2px solid #b5b5b5;
    color: #000;
    font-size: 13px;
}

.actions button {
    display: flex;
    align-items: center;
    justify-content: space-between;
    height: 31px;
}

.actions .group {
    padding: 1px 9px 0 8px;
    background: linear-gradient(#b9d1ea, #98b4d1);
}

.actions .item {
    padding: 0 10px 0 38px;
}

/* status bar */
.statusbar {
    display: flex;
    height: 29px;
    border-top: 1px solid #dcdcdc;
}

.statusbar span {
    width: 167px;
    margin-top: 2px;
    border-right: 1px solid #dcdcdc;
}

.statusbar span:first-child {
    flex: 1;
}

.statusbar span:last-child {
    width: 109px;
}

/* taskbar */
.taskbar {
    position: relative;
    display: grid;
    grid-template-columns: 1fr auto 1fr;
    align-items: center;
    height: 60px;
    color: #fff;
}

.wallpaper {
    position: absolute;
    inset: 0;
    width: 100%;
    height: 100%;
}

.apps {
    position: relative;
    grid-column: 2;
    display: flex;
    gap: 5px;
}

.apps button {
    position: relative;
    display: flex;
    align-items: center;
    justify-content: center;
    width: 50px;
    height: 50px;
    border-radius: 5px;
}

.apps .run::after {
    content: "";
    position: absolute;
    bottom: 1px;
    width: 8px;
    height: 4px;
    border-radius: 2px;
    background: #8d93b4;
}

.apps .focus {
    background: rgba(255, 255, 255, 0.08);
    border: 1px solid rgba(255, 255, 255, 0.08);
}

.apps .focus::after {
    bottom: 0;
    width: 20px;
    background: #4cc2ff;
}

.badge {
    position: absolute;
    top: 5px;
    right: 4px;
    width: 18px;
    height: 18px;
    border-radius: 9px;
    background: #e0484d;
    font-size: 12px;
    line-height: 18px;
}

.glyph-n {
    font: bold 16px "Liberation Serif", serif;
}

.glyph-31 {
    font: bold 16px "Liberation Serif", serif;
}

.glyph-cmd {
    font: 6px "Liberation Mono", monospace;
    fill: #fff;
}

.tray {
    position: relative;
    grid-column: 3;
    display: flex;
    align-items: center;
    justify-content: flex-end;
    padding-right: 27px;
}

.tray svg {
    fill: none;
    stroke: #fff;
}

.tray .fill {
    fill: #fff;
    stroke: none;
}

.tray .mic {
    margin: 0 23px 0 26px;
}

.tray .mic svg {
    stroke: #7fd6f5;
}

.quick {
    display: flex;
    align-items: center;
    gap: 10px;
}

.clock {
    margin: 0 11px 0 22px;
    text-align: right;
    font-size: 14px;
    line-height: 20px;
}

.bell .fill {
    fill: #8fe6ff;
}
```
